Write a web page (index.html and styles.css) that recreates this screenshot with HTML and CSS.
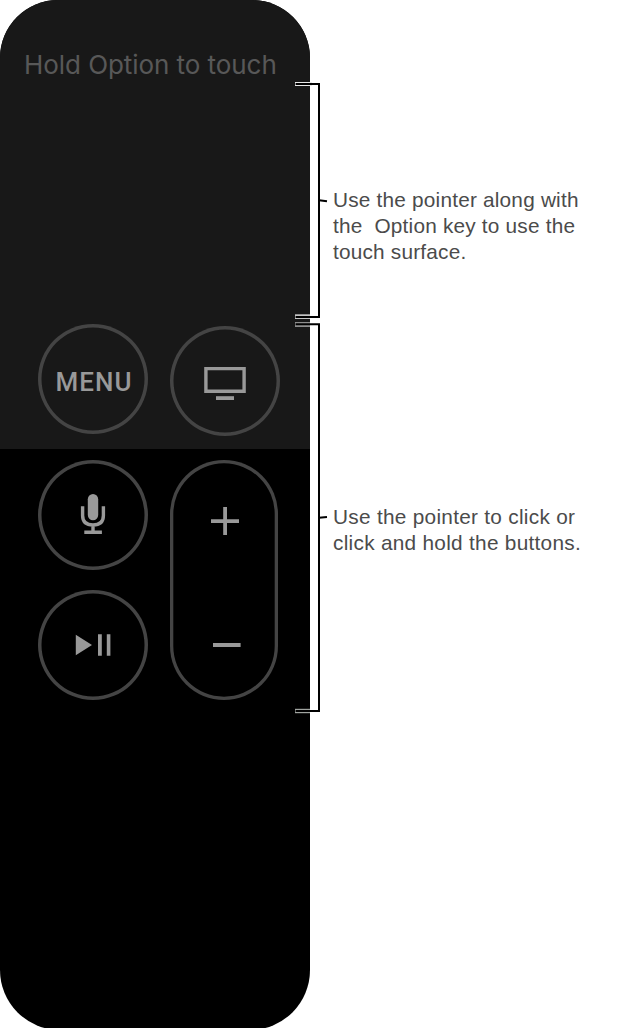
FILE: index.html
```html
<!DOCTYPE html>
<html lang="en">
<head>
<meta charset="utf-8">
<title>Remote</title>
<link rel="stylesheet" href="styles.css">
</head>
<body>
<main class="figure">
  <section class="remote">
    <div class="touch">
      <p class="hint">Hold Option to touch</p>
      <div class="row">
        <div class="button menu"><span>MENU</span></div>
        <div class="button tv">
          <svg width="110" height="110" viewBox="0 0 110 110"><path d="M35.9 42.6h38.2v22.6H35.9z" fill="none" stroke="#999" stroke-width="3.4"/><path d="M46 70.200h18v3.800H46z" fill="#999"/></svg>
        </div>
      </div>
    </div>
    <div class="lower">
      <div class="stack">
        <div class="button">
          <svg width="110" height="110" viewBox="0 0 110 110"><rect x="49.800" y="34" width="10.400" height="26.200" rx="5.200" fill="#999"/><path d="M44.600 46.200V55.500Q44.600 65 55 65T65.400 55.500V46.200M55 65v7M46.300 72.200h17.600" fill="none" stroke="#999" stroke-width="3.400"/></svg>
        </div>
        <div class="button">
          <svg width="110" height="110" viewBox="0 0 110 110" fill="#999"><path d="M37.800 44.800 54 55 37.800 65.300zM60 44.300h3.800v21.500H60zM68.800 44.300h3.600v21.500h-3.600z"/></svg>
        </div>
      </div>
      <div class="volume">
        <svg width="108" height="240" viewBox="0 0 108 240" fill="#999"><path d="M41 59.200h28v3.800H41zM53.200 47h3.800v28h-3.800zM43 183.100h27.600v3.800H43z"/></svg>
      </div>
    </div>
  </section>
  <aside class="notes">
    <p class="note note-touch"><span>Use the pointer along with</span><span>the&nbsp; Option key to use the</span><span>touch surface.</span></p>
    <p class="note note-buttons"><span>Use the pointer to click or</span><span>click and hold the buttons.</span></p>
  </aside>
  <svg class="brackets" width="40" height="640" viewBox="290 80 40 640">
    <path d="M295 82h17v4h-17z" fill="#e8e8e8"/>
    <path d="M295 314.300h15v4.700h-15z" fill="#c4c4c4"/>
    <path d="M295 322h15v5h-15z" fill="#8e8e8e"/>
    <path d="M295 708.800h15v4.400h-15z" fill="#a0a4a0"/>
    <g fill="none" stroke="#000" stroke-width="2">
      <path d="M295.600 84H319v233h-23.400M295.600 324.200H319V711h-23.400"/>
      <path d="M319 200.200l8 1M319 517.800l8-.8"/>
    </g>
  </svg>
</main>
</body>
</html>
```
FILE: styles.css
```css
* { box-sizing: border-box; }
body { margin: 0; background: #fff; overflow: hidden; }
.figure { position: relative; display: flex; align-items: flex-start; width: 618px; height: 1028px; overflow: hidden; }
.remote { width: 310px; height: 1030px; background: #000; border-radius: 58px 58px 60px 60px; overflow: hidden; }
.touch { height: 449px; background: #181818; display: flex; flex-direction: column; }
.hint { margin: 0; padding: 49px 0 0 24px; height: 324px; color: #585858; font: 26px/32px Inter, sans-serif; letter-spacing: -0.060px; white-space: nowrap; }
.row { display: flex; gap: 22px; padding-left: 38px; }
.button { width: 110px; height: 110px; border-radius: 50%; box-shadow: inset 0 0 0 3.500px #444; display: flex; align-items: center; justify-content: center; }
.menu { color: #999; font: 500 26px/32px Roboto, sans-serif; letter-spacing: 1px; padding: 6px 0 0 2px; }
.tv { margin-top: 2px; }
.lower { display: flex; gap: 22px; padding: 11px 0 0 38px; }
.stack { display: flex; flex-direction: column; gap: 20px; }
.volume { width: 108px; height: 240px; border-radius: 54px; box-shadow: inset 0 0 0 3.300px #444; }
.notes { padding-left: 23px; padding-top: 187px; color: #4b4b4b; font: 20.8px/26px "Liberation Sans", Arial, sans-serif; letter-spacing: 0.200px; white-space: nowrap; }
.note { margin: 0; }
.note span { display: block; }
.note-touch { height: 317px; }
.note-buttons { letter-spacing: 0.280px; }
.brackets { position: absolute; left: 290px; top: 80px; }
```
